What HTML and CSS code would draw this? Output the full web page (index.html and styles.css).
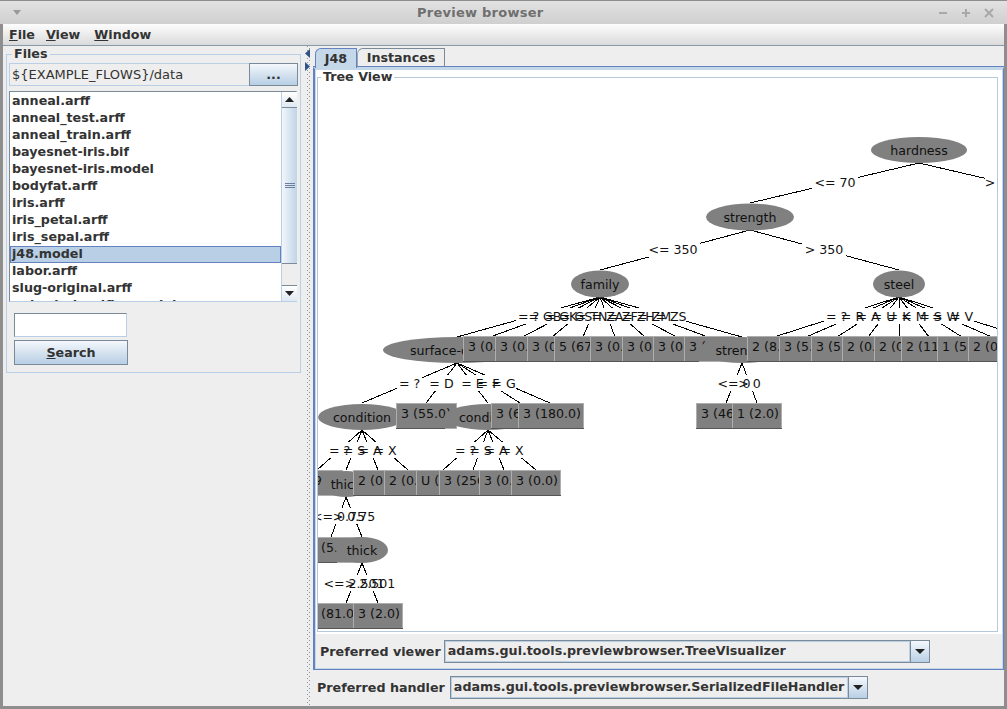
FILE: index.html
```html
<!DOCTYPE html>
<html lang="en">
<head>
<meta charset="utf-8">
<title>Preview browser</title>
<link rel="stylesheet" href="styles.css">
</head>
<body>
<div class="window">
  <header class="titlebar">
    <svg class="win-menu" width="10" height="7" viewBox="0 0 10 7"><path d="M1 1h8L5 6z" fill="#9a9a9a"/></svg>
    <span class="title">Preview browser</span>
    <span class="win-ctrls">
      <svg width="12" height="12" viewBox="0 0 12 12"><path d="M2 6h8" stroke="#a8a8a8" stroke-width="2"/></svg>
      <svg width="12" height="12" viewBox="0 0 12 12"><path d="M2 6h8M6 2v8" stroke="#a8a8a8" stroke-width="2"/></svg>
      <svg width="12" height="12" viewBox="0 0 12 12"><path d="M2 2l8 8M10 2l-8 8" stroke="#a8a8a8" stroke-width="2"/></svg>
    </span>
  </header>
  <nav class="menubar">
    <span class="menu"><u>F</u>ile</span>
    <span class="menu"><u>V</u>iew</span>
    <span class="menu"><u>W</u>indow</span>
  </nav>
  <div class="main">
    <aside class="left">
      <fieldset class="files">
        <legend>Files</legend>
        <div class="pathrow">
          <span class="pathtext">${EXAMPLE_FLOWS}/data</span>
          <button class="btn dots">...</button>
        </div>
        <div class="listbox">
          <ul class="list">
            <li>anneal.arff</li>
            <li>anneal_test.arff</li>
            <li>anneal_train.arff</li>
            <li>bayesnet-iris.bif</li>
            <li>bayesnet-iris.model</li>
            <li>bodyfat.arff</li>
            <li>iris.arff</li>
            <li>iris_petal.arff</li>
            <li>iris_sepal.arff</li>
            <li class="sel">j48.model</li>
            <li>labor.arff</li>
            <li>slug-original.arff</li>
            <li>output-classifier.model</li>
          </ul>
          <div class="scrollbar">
            <div class="sb-btn"><svg width="9" height="5" viewBox="0 0 9 5"><path d="M4.500 0L9 5H0z" fill="#222"/></svg></div>
            <div class="sb-thumb"><svg width="10" height="6" viewBox="0 0 10 6"><path class="grip" d="M0 .5h10M0 2.500h10M0 4.500h10"/></svg></div>
            <div class="sb-track"></div>
            <div class="sb-btn down"><svg width="9" height="5" viewBox="0 0 9 5"><path d="M0 0h9L4.500 5z" fill="#222"/></svg></div>
          </div>
        </div>
        <div class="searchbox">
          <div class="input"></div>
          <button class="btn search"><u>S</u>earch</button>
        </div>
      </fieldset>
    </aside>
    <div class="splitter">
      <svg class="arrow" width="5" height="9" viewBox="0 0 5 9"><path d="M5 0v9L0 4.500z" fill="#2f5288"/></svg>
      <svg class="arrow" width="5" height="9" viewBox="0 0 5 9"><path d="M0 0v9l5-4.500z" fill="#2f5288"/></svg>
    </div>
    <section class="right">
      <div class="tabs">
        <span class="tab active">J48</span>
        <span class="tab">Instances</span>
      </div>
      <div class="tabpanel">
        <fieldset class="treeview">
          <legend>Tree View</legend>
          <svg class="tree" viewBox="318 78 679 553" width="679" height="553">
            <path class="edge" d="M919 163L750 203M919 163L1100 205M750 230L600 270M750 230L899 270M600 297L457 337M600 297L490 337M600 297L522 337M600 297L552 337M600 297L583 337M600 297L615 337M600 297L645 337M600 297L677 337M600 297L708 337M600 297L742 337M899 297L774 337M899 297L806 337M899 297L837 337M899 297L868 337M899 297L899 337M899 297L929 337M899 297L962 337M899 297L992 337M899 297L1024 337M457 363L362 403M457 363L426 403M457 363L488 403M457 363L520 403M457 363L550 403M742 363L726 403M742 363L757 403M362 430L317 470M362 430L346 470M362 430L378 470M362 430L408 470M488 430L443 470M488 430L473 470M488 430L504 470M488 430L536 470M346 497L331 537M346 497L362 537M362 563L346 603M362 563L378 603"/>
            <g class="lbg">
              <rect x="812" y="175" width="46" height="16"/><rect x="985" y="175" width="30" height="16"/>
              <rect x="647" y="241" width="53" height="16"/><rect x="802" y="241" width="44" height="16"/>
              <rect x="516" y="308" width="25" height="16"/><rect x="530" y="308" width="30" height="16"/><rect x="546" y="308" width="30" height="16"/><rect x="561" y="308" width="30" height="16"/><rect x="576" y="308" width="30" height="16"/><rect x="592" y="308" width="30" height="16"/><rect x="607" y="308" width="30" height="16"/><rect x="623" y="308" width="30" height="16"/><rect x="639" y="308" width="30" height="16"/><rect x="656" y="308" width="30" height="16"/>
              <rect x="824" y="308" width="25" height="16"/><rect x="840" y="308" width="25" height="16"/><rect x="856" y="308" width="25" height="16"/><rect x="871" y="308" width="25" height="16"/><rect x="887" y="308" width="25" height="16"/><rect x="902" y="308" width="25" height="16"/><rect x="918" y="308" width="25" height="16"/><rect x="933" y="308" width="25" height="16"/><rect x="949" y="308" width="25" height="16"/>
              <rect x="397" y="375" width="25" height="16"/><rect x="429" y="375" width="25" height="16"/><rect x="460" y="375" width="25" height="16"/><rect x="476" y="375" width="25" height="16"/><rect x="491" y="375" width="25" height="16"/>
              <rect x="715" y="375" width="38" height="16"/><rect x="736" y="375" width="28" height="16"/>
              <rect x="327" y="442" width="25" height="16"/><rect x="342" y="442" width="25" height="16"/><rect x="358" y="442" width="25" height="16"/><rect x="373" y="442" width="25" height="16"/>
              <rect x="453" y="442" width="25" height="16"/><rect x="468" y="442" width="25" height="16"/><rect x="484" y="442" width="25" height="16"/><rect x="500" y="442" width="25" height="16"/>
              <rect x="309" y="508" width="58" height="16"/><rect x="330" y="508" width="48" height="16"/>
              <rect x="322" y="575" width="64" height="16"/><rect x="344" y="575" width="52" height="16"/>
            </g>
            <g class="lbl">
              <text x="835" y="187">&lt;= 70</text><text x="1000" y="187">&gt; 70</text>
              <text x="673" y="254">&lt;= 350</text><text x="824" y="254">&gt; 350</text>
              <text x="528.500" y="321">= ?</text><text x="545" y="321">= GB</text><text x="561" y="321">= GK</text><text x="576" y="321">= GS</text><text x="591.500" y="321">= TN</text><text x="607.500" y="321">= ZA</text><text x="622.500" y="321">= ZF</text><text x="638.500" y="321">= ZH</text><text x="654" y="321">= ZM</text><text x="671" y="321">= ZS</text>
              <text x="836.500" y="321">= ?</text><text x="852.500" y="321">= R</text><text x="868" y="321">= A</text><text x="883.500" y="321">= U</text><text x="899" y="321">= K</text><text x="914" y="321">= M</text><text x="930.500" y="321">= S</text><text x="945.500" y="321">= W</text><text x="961.500" y="321">= V</text>
              <text x="409.500" y="388">= ?</text><text x="441.500" y="388">= D</text><text x="472.500" y="388">= E</text><text x="488.500" y="388">= F</text><text x="503.500" y="388">= G</text>
              <text x="734" y="388">&lt;= 0</text><text x="749.500" y="388">&gt; 0</text>
              <text x="339.500" y="455">= ?</text><text x="354" y="455">= S</text><text x="370" y="455">= A</text><text x="385" y="455">= X</text>
              <text x="465.500" y="455">= ?</text><text x="480.500" y="455">= S</text><text x="496" y="455">= A</text><text x="512" y="455">= X</text>
              <text x="338.500" y="521">&lt;= 0.75</text><text x="354" y="521">&gt; 0.75</text>
              <text x="354" y="588">&lt;= 2.501</text><text x="370" y="588">&gt; 2.501</text>
            </g>
            <g class="ell">
              <ellipse cx="919" cy="150" rx="48" ry="13"/><text x="919" y="155">hardness</text>
              <ellipse cx="750" cy="217" rx="44" ry="13.500"/><text x="750" y="222">strength</text>
              <ellipse cx="600" cy="284" rx="29" ry="13.500"/><text x="600" y="289">family</text>
              <ellipse cx="899" cy="284" rx="26" ry="13.500"/><text x="899" y="289">steel</text>
            </g>
            <g class="nodes">
              <ellipse cx="457" cy="350" rx="74" ry="13"/><text class="mid" x="457" y="355">surface-quality</text>
              <rect x="463.500" y="336.500" width="54" height="25"/><text x="468" y="351">3 (0.0)</text>
              <rect x="495.500" y="336.500" width="50" height="25"/><text x="500" y="351">3 (0.0)</text>
              <rect x="527.500" y="336.500" width="50" height="25"/><text x="532" y="351">3 (0.0)</text>
              <rect x="554.500" y="336.500" width="60" height="25"/><text x="559" y="351">5 (67.0)</text>
              <rect x="590.500" y="336.500" width="50" height="25"/><text x="595" y="351">3 (0.0)</text>
              <rect x="622.500" y="336.500" width="50" height="25"/><text x="627" y="351">3 (0.0)</text>
              <rect x="653.500" y="336.500" width="50" height="25"/><text x="658" y="351">3 (0.0)</text>
              <rect x="684.500" y="336.500" width="50" height="25"/><text x="689" y="351">3 (0.0)</text>
              <ellipse cx="742" cy="350" rx="44" ry="13"/><text class="mid" x="742" y="355">strength</text>
              <rect x="747.500" y="336.500" width="50" height="25"/><text x="752" y="351">2 (8.0)</text>
              <rect x="779.500" y="336.500" width="50" height="25"/><text x="784" y="351">3 (5.0)</text>
              <rect x="811.500" y="336.500" width="50" height="25"/><text x="816" y="351">3 (5.0)</text>
              <rect x="842.500" y="336.500" width="50" height="25"/><text x="847" y="351">2 (0.0)</text>
              <rect x="874.500" y="336.500" width="50" height="25"/><text x="879" y="351">2 (0.0)</text>
              <rect x="901.500" y="336.500" width="60" height="25"/><text x="906" y="351">2 (11.0)</text>
              <rect x="937.500" y="336.500" width="50" height="25"/><text x="942" y="351">1 (5.0)</text>
              <rect x="968.500" y="336.500" width="50" height="25"/><text x="973" y="351">2 (0.0)</text>

              <ellipse cx="362" cy="417" rx="44" ry="13"/><text class="mid" x="362" y="422">condition</text>
              <rect x="396.500" y="403.500" width="60" height="25"/><text x="401" y="418">3 (55.0)</text>
              <ellipse cx="488" cy="417" rx="44" ry="13"/><text class="mid" x="488" y="422">condition</text>
              <rect x="491.500" y="403.500" width="60" height="25"/><text x="496" y="418">3 (68.0)</text>
              <rect x="518.500" y="403.500" width="65" height="25"/><text x="523" y="418">3 (180.0)</text>
              <rect x="696.500" y="403.500" width="65" height="25"/><text x="701" y="418">3 (460.0)</text>
              <rect x="732.500" y="403.500" width="49" height="25"/><text x="737" y="418">1 (2.0)</text>

              <rect x="292.500" y="470.500" width="50" height="25"/><text x="297" y="485">3 (9.0)</text>
              <ellipse cx="346" cy="484" rx="26" ry="13"/><text class="mid" x="346" y="489">thick</text>
              <rect x="353.500" y="470.500" width="50" height="25"/><text x="358" y="485">2 (0.0)</text>
              <rect x="384.500" y="470.500" width="50" height="25"/><text x="389" y="485">2 (0.0)</text>
              <rect x="416.500" y="470.500" width="54" height="25"/><text x="421" y="485">U (0.0)</text>
              <rect x="439.500" y="470.500" width="68" height="25"/><text x="444" y="485">3 (256.0)</text>
              <rect x="479.500" y="470.500" width="50" height="25"/><text x="484" y="485">3 (0.0)</text>
              <rect x="511.500" y="470.500" width="49" height="25"/><text x="516" y="485">3 (0.0)</text>

              <rect x="304.500" y="537.500" width="54" height="25"/><text x="309" y="552">3 (5.0)</text>
              <ellipse cx="362" cy="550" rx="26" ry="13"/><text class="mid" x="362" y="555">thick</text>

              <rect x="304.500" y="603.500" width="60" height="25"/><text x="309" y="618">3 (81.0)</text>
              <rect x="353.500" y="603.500" width="49" height="25"/><text x="358" y="618">3 (2.0)</text>
              <path class="box-bottom" d="M463 361.500H699M747 361.500H997M396 428.500H445M491 428.500H584M696 428.500H782M353 495.500H561M318 562.500H337M318 628.500H403"/>
            </g>
          </svg>
        </fieldset>
        <div class="formrow viewer">
          <label>Preferred viewer</label>
          <div class="combo"><span class="combotext">adams.gui.tools.previewbrowser.TreeVisualizer</span><span class="comboarrow"><svg width="10" height="5" viewBox="0 0 10 5"><path d="M0 0h10L5 5z" fill="#222"/></svg></span></div>
        </div>
      </div>
      <div class="formrow handler">
        <label>Preferred handler</label>
        <div class="combo"><span class="combotext">adams.gui.tools.previewbrowser.SerializedFileHandler</span><span class="comboarrow"><svg width="10" height="5" viewBox="0 0 10 5"><path d="M0 0h10L5 5z" fill="#222"/></svg></span></div>
      </div>
    </section>
  </div>
</div>
</body>
</html>
```
FILE: styles.css
```css
* { box-sizing: border-box; }
html, body { margin: 0; padding: 0; }
body { width: 1007px; height: 709px; overflow: hidden; background: #eeeeee; font: bold 12.7px "DejaVu Sans", sans-serif; color: #333; }
.window { width: 1007px; height: 709px; display: flex; flex-direction: column; border: 3px solid #8e8e8e; border-width: 1px 3px 3px 3px; background: #eeeeee; }
.titlebar { height: 23px; flex: none; display: flex; align-items: center; position: relative; background: linear-gradient(#e2e2e2, #cfcfcf); margin: 0 -3px; padding: 0 12px; }
.win-menu { flex: none; }
.title { position: absolute; left: 417px; top: 4px; color: #6f6f6f; font-size: 13px; letter-spacing: .25px; }
.win-ctrls { margin-left: auto; display: flex; gap: 11px; }
.menubar { height: 22px; flex: none; display: flex; align-items: center; gap: 11px; padding: 0 6px; background: linear-gradient(#fdfdfd, #dadada); border-bottom: 1px solid #8a99a6; color: #333; }
.menubar .menu:nth-child(2) { margin-right: 3px; }
.main { flex: 1; display: flex; min-height: 0; }
.left { width: 300px; flex: none; padding: 1px 0 0 3px; }
fieldset { margin: 0; min-width: 0; }
legend { padding: 0 2px; margin-left: 3px; line-height: 14px; }
.files { height: 326px; width: 295px; border: 1px solid #b8cfe5; padding: 0 2px; display: flex; flex-direction: column; }
.pathrow { height: 23px; display: flex; background: #eeeeee; border: 1px solid #b8cfe5; margin-top: 2px; width: 289px; }
.pathtext { flex: 1; font-weight: normal; font-size: 13px; padding-left: 2px; line-height: 21px; color: #333; }
.btn { font: inherit; color: #333; border: 1px solid #7a8a99; background: linear-gradient(#f4f8fc, #d5e2ef 50%, #b8cfe5); padding: 0; }
.dots { width: 49px; height: 23px; margin: -1px -1px 0 0; }
.listbox { height: 211px; width: 288px; margin-top: 5px; display: flex; border: 1px solid #7a8a99; border-color: #7a8a99 #b8cfe5 #b8cfe5 #7a8a99; background: #fff; }
.list { flex: 1; margin: 0; padding: 1px 0 0; list-style: none; overflow: hidden; height: 209px; }
.list li { height: 17px; line-height: 16px; padding-left: 2px; white-space: nowrap; color: #333; }
.list li.sel { background: #b8cfe5; outline: 1px solid #6382bf; outline-offset: -1px; }
.scrollbar { width: 16px; flex: none; display: flex; flex-direction: column; background: #eeeeee; border-left: 1px solid #b8cfe5; margin-right: -1px; }
.sb-btn { height: 16px; flex: none; display: flex; align-items: center; justify-content: center; background: linear-gradient(#ffffff, #dfe8f2); border-bottom: 1px solid #7a8a99; }
.sb-btn.down { border-bottom: 0; border-top: 1px solid #7a8a99; }
.sb-thumb { height: 156px; flex: none; display: flex; align-items: center; justify-content: center; background: linear-gradient(90deg, #f2f6fa, #c0d4e8); border-bottom: 1px solid #7a8a99; }
.grip { stroke: #6a7fa0; stroke-width: 1; fill: none; shape-rendering: crispEdges; }
.sb-track { flex: 1; background: #eeeeee; }
.searchbox { margin: 11px 0 0 5px; display: flex; flex-direction: column; gap: 3px; width: 114px; }
.input { width: 113px; height: 24px; background: #fff; border: 1px solid #7a8a99; border-right-color: #b8cfe5; border-bottom-color: #b8cfe5; }
.search { height: 25px; width: 114px; }
.splitter { width: 9px; flex: none; display: flex; flex-direction: column; gap: 4px; padding: 3px 0 0 2px; background-image: linear-gradient(#8a96a3 1px, transparent 1px), linear-gradient(#8a96a3 1px, transparent 1px); background-size: 1px 4px, 1px 4px; background-position: 4px 0, 6px 2px; background-repeat: repeat-y; }
.arrow { display: block; flex: none; }
.right { flex: 1; min-width: 0; display: flex; flex-direction: column; padding-left: 1px; }
.tabs { height: 21px; flex: none; display: flex; align-items: flex-end; padding-left: 2px; }
.tab { height: 19px; width: 88px; text-align: center; line-height: 18px; color: #333; border: 1px solid #7a8a99; border-bottom: 0; background: #eeeeee; border-radius: 6px 0 0 0; border-left-color: #9aa8b6; }
.tab.active { width: 42px; background: #c5d8ea; border-color: #6382bf; border-radius: 6px 0 0 0; height: 20px; margin-bottom: -1px; position: relative; z-index: 1; line-height: 20px; }
.tabpanel { height: 603px; flex: none; border: 1px solid #6382bf; border-left-width: 2px; border-top-width: 2px; border-top-color: #c5d8ea; display: flex; flex-direction: column; padding: 8px 5px 0 2px; box-shadow: 0 -1px 0 #6382bf, inset 0 0 0 1px #c5d8ea; background: linear-gradient(#fff 565px, #eeeeee 565px); }
.treeview { height: 555px; flex: none; padding: 0; border: 1px solid #b8c8dc; background: #fff; position: relative; display: block; }
.treeview legend { position: absolute; top: -8px; left: 0; background: #fff; color: #333; }
.tree { display: block; }
.edge { fill: none; stroke: #000; stroke-width: 1; shape-rendering: crispEdges; }
.lbg rect { fill: #fff; }
.tree text { font: normal 12.6px "DejaVu Sans", sans-serif; fill: #111; }
.lbl text, .ell text, .nodes .mid { text-anchor: middle; }
.ell ellipse, .nodes ellipse { fill: #808080; }
.nodes rect { fill: #808080; stroke: #aeaeae; }
.box-bottom { fill: none; stroke: #555; stroke-width: 1; shape-rendering: crispEdges; }
.formrow { display: flex; align-items: center; height: 23px; flex: none; }
.formrow label { color: #333; padding-bottom: 1px; }
.viewer { margin-top: 8px; padding-left: 3px; gap: 3px; }
.handler { margin-top: 6px; padding-left: 4px; gap: 5px; }
.combo { display: flex; height: 23px; border: 1px solid #7a8a99; background: #eeeeee; }
.viewer .combo { width: 486px; }
.handler .combo { width: 418px; }
.combotext { flex: 1; padding-left: 3px; line-height: 20px; white-space: nowrap; overflow: hidden; box-shadow: inset 0 0 0 1px #b8cfe5; }
.comboarrow { width: 19px; flex: none; display: flex; align-items: center; justify-content: center; border-left: 1px solid #7a8a99; background: linear-gradient(#f4f8fc, #b8cfe5); }
```
